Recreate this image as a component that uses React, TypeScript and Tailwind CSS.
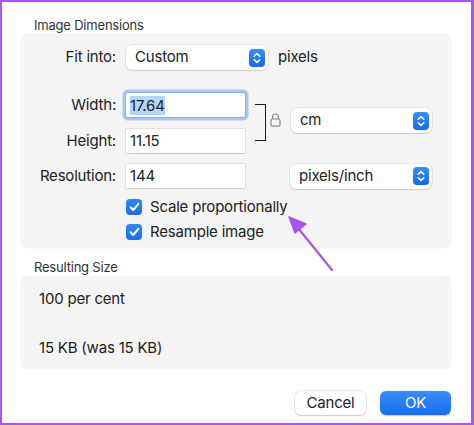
import React from "react";

const Stepper = () => (
  <div className="w-[16px] h-[18px] rounded-[4px] bg-gradient-to-b from-[#3d8ef8] to-[#1469f0] flex items-center justify-center">
    <svg width="8" height="12" viewBox="0 0 8 12" fill="none">
      <path d="M1.2 4.2 L4 1.6 L6.8 4.2" stroke="white" strokeWidth="1.5" strokeLinecap="round" strokeLinejoin="round" />
      <path d="M1.2 7.8 L4 10.4 L6.8 7.8" stroke="white" strokeWidth="1.5" strokeLinecap="round" strokeLinejoin="round" />
    </svg>
  </div>
);

const Select = ({ label, w }: { label: string; w: string }) => (
  <div
    className={`${w} h-[25px] bg-white rounded-[6px] shadow-[0_0_0_0.5px_rgba(0,0,0,0.12),0_1px_1.5px_rgba(0,0,0,0.12)] flex items-center justify-between pl-[9px] pr-[3px]`}
  >
    <span className="text-[15px] text-[#222]">{label}</span>
    <Stepper />
  </div>
);

const Input = ({ children, focused }: { children: React.ReactNode; focused?: boolean }) => (
  <div
    className={`w-[119px] h-[24px] bg-white flex items-center pl-[4px] text-[15px] text-[#222] ${
      focused
        ? "shadow-[0_0_0_1px_#8ab4f0,0_0_0_3.5px_#a9c8f5] rounded-[2px]"
        : "shadow-[0_0_0_0.5px_rgba(0,0,0,0.15),0_0.5px_1px_rgba(0,0,0,0.1)]"
    }`}
  >
    {children}
  </div>
);

const Check = ({ label }: { label: string }) => (
  <div className="flex items-center h-[16px] ml-[105px]">
    <div className="w-[16px] h-[16px] rounded-[4px] bg-gradient-to-b from-[#2f87f7] to-[#1670f1] flex items-center justify-center">
      <svg width="11" height="10" viewBox="0 0 11 10" fill="none">
        <path d="M1.6 5.2 L4.2 8 L9.4 1.8" stroke="white" strokeWidth="2" strokeLinecap="round" strokeLinejoin="round" />
      </svg>
    </div>
    <span className="ml-[8px] text-[15px] text-[#222]">{label}</span>
  </div>
);

const Label = ({ children }: { children: React.ReactNode }) => (
  <div className="w-[95px] text-right text-[15px] text-[#222]">{children}</div>
);

export default function App() {
  return (
    <div
      className="relative w-[474px] h-[425px] bg-white border-[#a855f7] border-t-2 border-l-2 border-b-2 border-r-[3px] overflow-hidden tracking-[-0.2px]"
      style={{ fontFamily: "Inter, 'Liberation Sans', sans-serif" }}
    >
      <div className="pt-[15px] pl-[19px]">
        <div className="pl-[13px] text-[13px] leading-[16px] text-[#333]">Image Dimensions</div>
        <div className="mt-[1px] w-[430px] h-[214px] bg-[#f5f5f5] rounded-[6px] shadow-[0_0_0_0.5px_rgba(0,0,0,0.05)] pt-[11px]">
          <div className="flex items-center h-[25px]">
            <Label>Fit into:</Label>
            <div className="ml-[10px]">
              <Select label="Custom" w="w-[142px]" />
            </div>
            <span className="ml-[10px] text-[15px] text-[#222]">pixels</span>
          </div>

          <div className="flex mt-[23px]">
            <div className="flex flex-col gap-[12px]">
              <div className="flex items-center h-[24px]">
                <Label>Width:</Label>
                <div className="ml-[10px]">
                  <Input focused>
                    <span className="bg-[#b3d4fb] leading-[19px]">17.64</span>
                  </Input>
                </div>
              </div>
              <div className="flex items-center h-[24px]">
                <Label>Height:</Label>
                <div className="ml-[10px]">
                  <Input>11.15</Input>
                </div>
              </div>
            </div>
            <div className="ml-[10px] mt-[11px] w-[11px] h-[37px] border-t-[1.5px] border-r-[1.5px] border-b-[1.5px] border-[#1a1a1a]" />
            <div className="ml-[4px] mt-[20px]">
              <svg width="11" height="14" viewBox="0 0 11 14" fill="none">
                <path d="M2.5 6 V4 A3 3 0 0 1 8.5 4 V6" stroke="#8a8a8a" strokeWidth="1.2" />
                <rect x="1" y="6" width="9" height="7.2" rx="1.5" stroke="#8a8a8a" strokeWidth="1.2" />
              </svg>
            </div>
            <div className="ml-[10px] mt-[15px]">
              <Select label="cm" w="w-[141px]" />
            </div>
          </div>

          <div className="flex items-center h-[24px] mt-[11px]">
            <Label>Resolution:</Label>
            <div className="ml-[10px]">
              <Input>144</Input>
            </div>
            <div className="ml-[45px]">
              <Select label="pixels/inch" w="w-[142px]" />
            </div>
          </div>

          <div className="mt-[11px] flex flex-col gap-[9px]">
            <Check label="Scale proportionally" />
            <Check label="Resample image" />
          </div>
        </div>

        <div className="mt-[11px] pl-[13px] text-[13px] leading-[16px] text-[#333]">Resulting Size</div>
        <div className="mt-[1px] w-[430px] h-[93px] bg-[#f5f5f5] rounded-[6px] shadow-[0_0_0_0.5px_rgba(0,0,0,0.05)] pt-[14px] pl-[18px] text-[15px] leading-[18px] text-[#222]">
          <div>100 per cent</div>
          <div className="mt-[31px]">15 KB (was 15 KB)</div>
        </div>

        <div className="mt-[22px] w-[430px] flex justify-end gap-[14px]">
          <div className="w-[71px] h-[24px] rounded-[6px] bg-white shadow-[0_0_0_0.5px_rgba(0,0,0,0.15),0_1px_1.5px_rgba(0,0,0,0.15)] flex items-center justify-center text-[15px] text-[#222]">
            Cancel
          </div>
          <div className="w-[71px] h-[24px] rounded-[6px] bg-gradient-to-b from-[#3a8cf8] to-[#146ef1] shadow-[0_0.5px_1px_rgba(0,0,0,0.2)] flex items-center justify-center text-[15px] text-white">
            OK
          </div>
        </div>
      </div>

      <svg className="absolute left-0 top-0 pointer-events-none" width="474" height="425" viewBox="0 0 474 425">
        <line x1="330" y1="268" x2="296" y2="226" stroke="#a456f0" strokeWidth="2.2" strokeLinecap="round" />
        <path d="M287 215 L304 222 L293 231 Z" fill="#a456f0" stroke="#a456f0" strokeWidth="1.5" strokeLinejoin="round" />
      </svg>
    </div>
  );
}
